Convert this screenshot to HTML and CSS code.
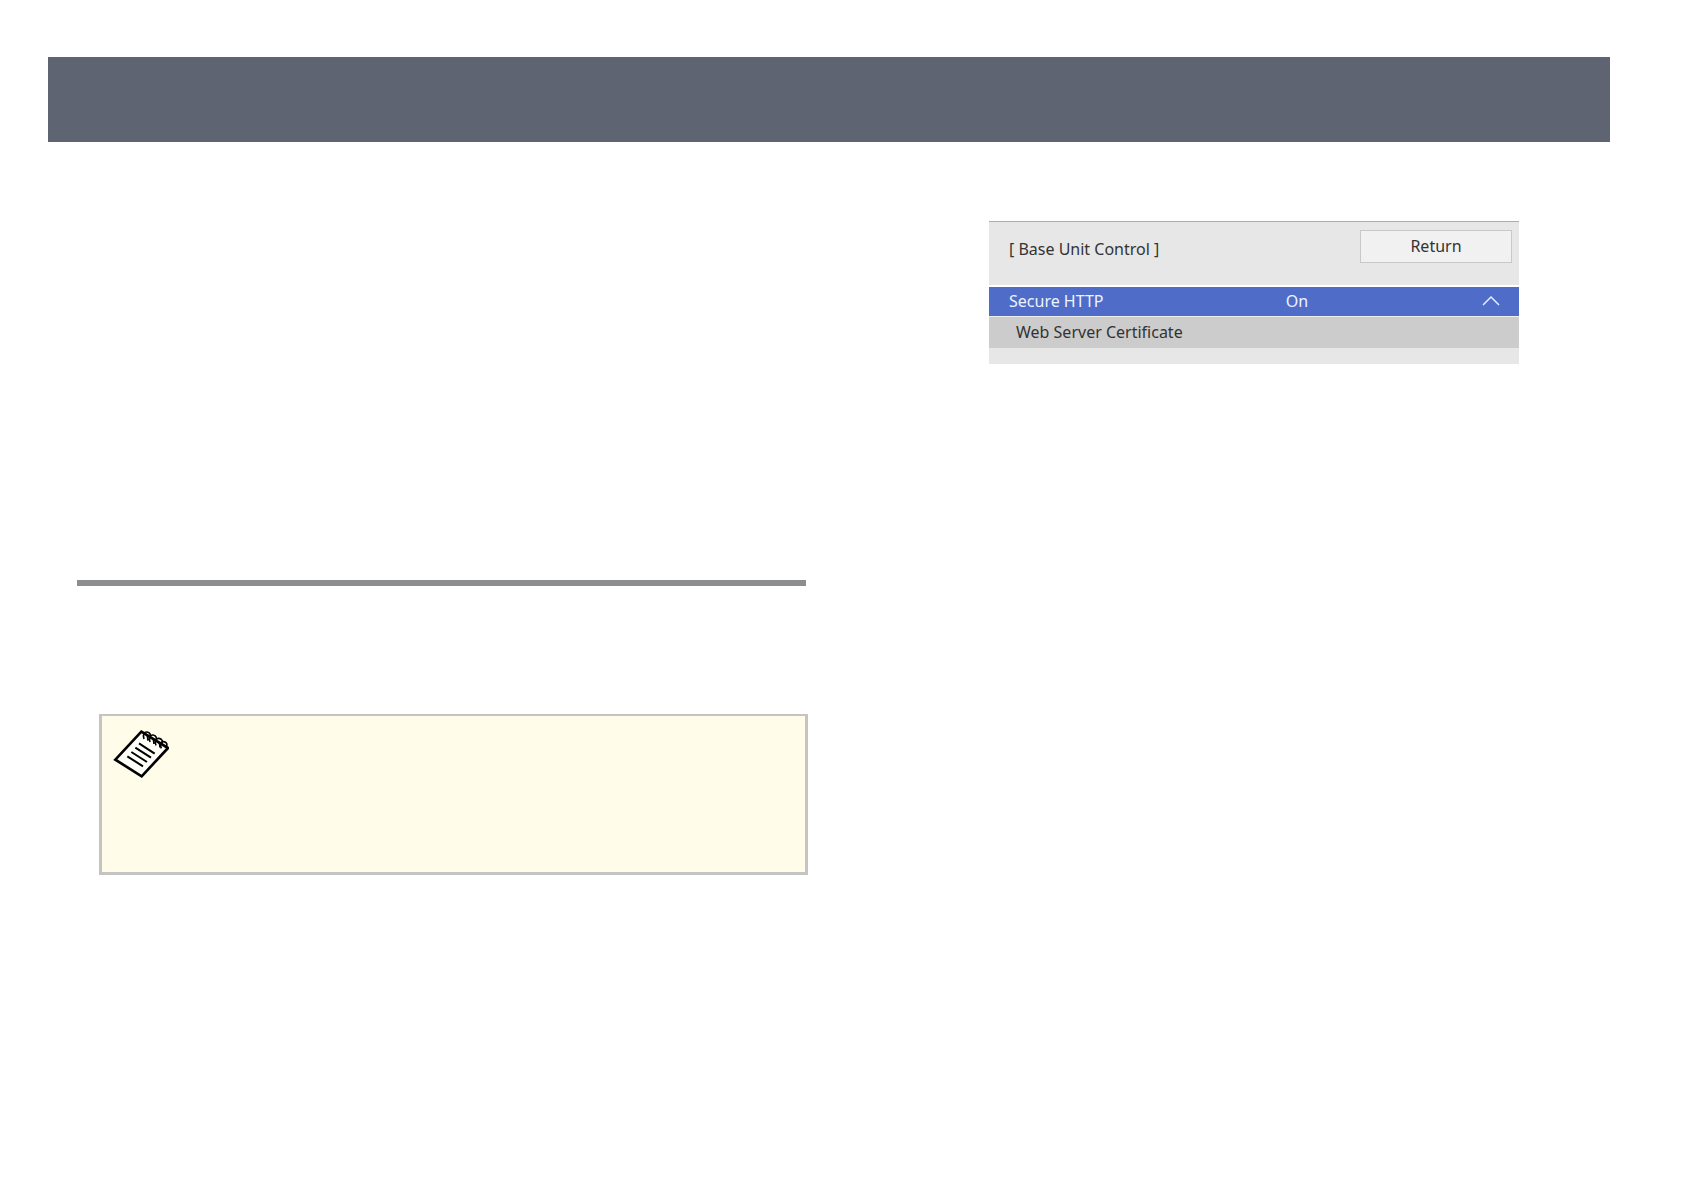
FILE: index.html
```html
<!DOCTYPE html>
<html lang="en">
<head>
<meta charset="utf-8">
<meta name="viewport" content="width=device-width, initial-scale=1">
<title>Base Unit Control</title>
<link rel="stylesheet" href="styles.css">
</head>
<body>
<header class="banner"></header>
<main class="columns">
  <section class="column-left">
    <hr class="section-rule">
    <aside class="note" aria-label="Note">
      <svg class="note-icon" viewBox="54 72 168 150" aria-hidden="true">
        <path d="M139 80 L219 129 L140 214 L61 164 Z" fill="#fffffa" stroke="#000" stroke-width="8"/>
        <path d="M132 115 L179 146 M121 128 L168 158 M109 141 L156 171 M97 154 L144 184" fill="none" stroke="#000" stroke-width="6"/>
        <path d="M147 102 C142 90 148 80 156 81 C165 82 168 90 165 97 M157 92 L159 107 M165 111 C160 99 166 89 174 90 C183 91 186 99 183 106 M175 101 L177 117 M183 121 C178 109 184 99 192 100 C201 101 204 109 201 116 M193 111 L195 127 M199 130 C194 119 198 109 206 110 C215 111 218 118 214 126" fill="none" stroke="#000" stroke-width="5"/>
      </svg>
    </aside>
  </section>
  <section class="menu">
    <div class="menu-head">
      <h1 class="menu-title">[ Base Unit Control ]</h1>
      <button class="return" type="button">Return</button>
    </div>
    <button class="row row-active" type="button" aria-expanded="true">
      <span>Secure HTTP</span>
      <span>On</span>
      <svg class="chevron" viewBox="0 0 18 10" aria-hidden="true"><path d="M1 9 L9 1 L17 9"/></svg>
    </button>
    <button class="row row-sub" type="button">Web Server Certificate</button>
  </section>
</main>
</body>
</html>
```
FILE: styles.css
```css
* {
  box-sizing: border-box;
}

body {
  margin: 0;
  padding: 57px 74px 57px 48px;
  background: #fff;
  color: #333;
  font: 16px/24px "Noto Sans", "Open Sans", sans-serif;
}

button {
  margin: 0;
  border: 0;
  color: inherit;
  font: inherit;
}

.banner {
  height: 85px;
  background: #5f6472;
}

.columns {
  display: grid;
  grid-template-columns: 731fr 530fr;
  align-items: start;
  gap: 181px;
  padding: 79px 91px 0 29px;
}

.column-left {
  padding-top: 359px;
}

.section-rule {
  height: 6px;
  margin: 0 2px 128px 0;
  border: 0;
  background: #8c8d8e;
}

.note {
  min-height: 161px;
  margin-left: 22px;
  padding: 13px 11px;
  border: 3px solid #c5c4c2;
  border-top-width: 2px;
  background: #fffcea;
}

.note-icon {
  display: block;
  width: 56px;
  height: 50px;
}

.menu {
  padding-bottom: 16px;
  border-top: 1px solid #abadae;
  background: #e7e7e7;
}

.menu-head {
  display: flex;
  justify-content: space-between;
  align-items: flex-start;
  height: 65px;
  padding: 8px 7px 0 20px;
  border-bottom: 2px solid #fff;
}

.menu-title {
  margin: 0;
  padding-top: 7px;
  font-size: 16px;
  font-weight: 400;
}

.return {
  width: 152px;
  height: 33px;
  padding: 0 0 2px;
  border: 1px solid #c8c8c8;
  background: #f1f1f1;
}

.row {
  display: grid;
  align-items: center;
  width: 100%;
  text-align: left;
}

.row-active {
  grid-template-columns: 278fr 197fr 18px;
  height: 30px;
  padding: 0 19px 2px 20px;
  border-bottom: 1px solid #eee;
  background: #4f6dc8;
  color: #eef3ff;
}

.row-sub {
  height: 31px;
  padding: 0 27px 2px;
  background: #ccc;
}

.chevron {
  width: 18px;
  height: 10px;
  fill: none;
  stroke: #e4ecff;
  stroke-width: 1.5;
}
```
